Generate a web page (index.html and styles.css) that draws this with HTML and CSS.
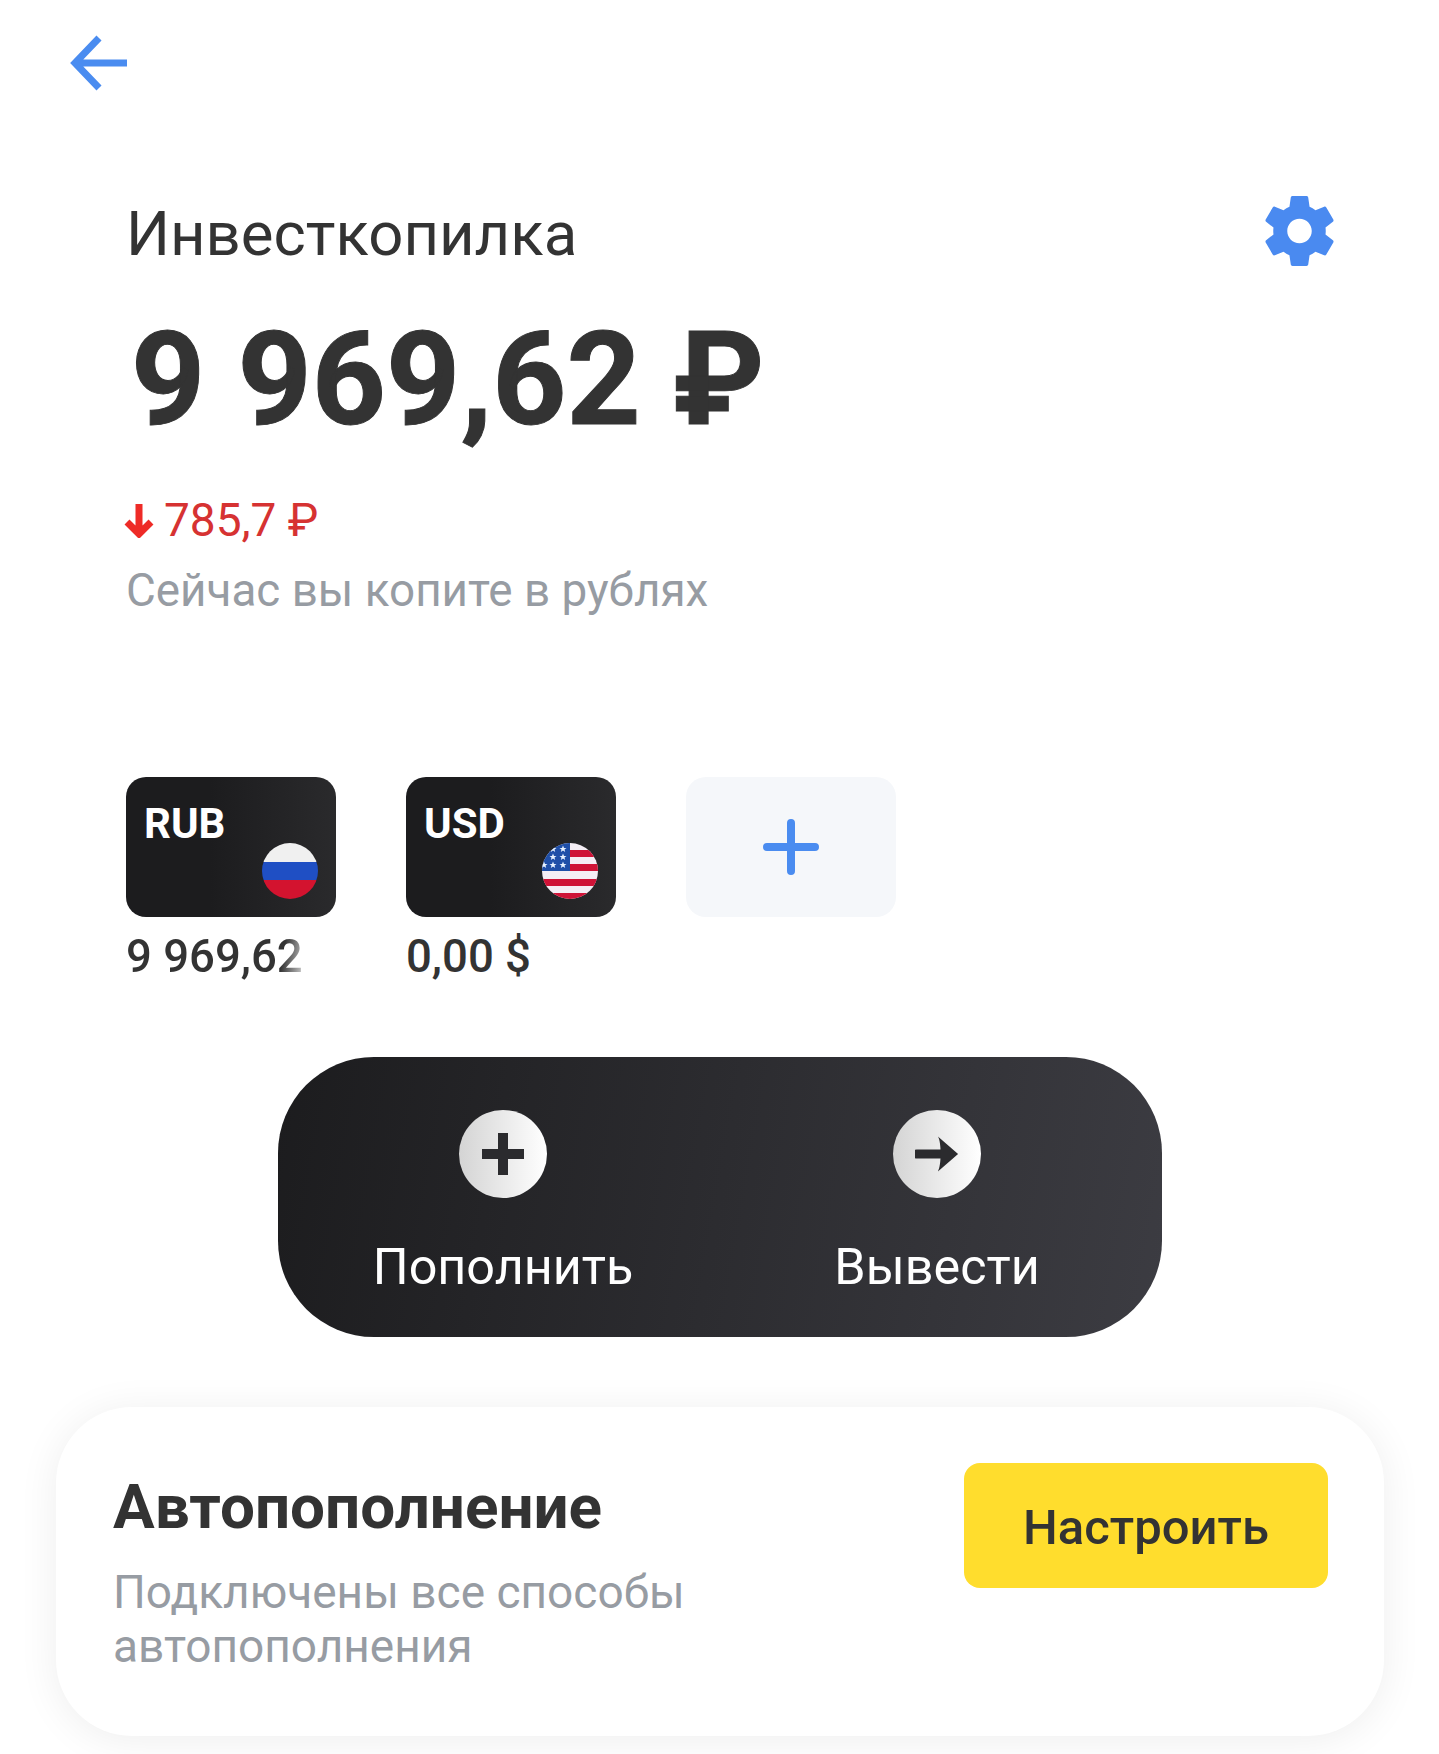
FILE: index.html
```html
<!DOCTYPE html>
<html lang="ru">
<head>
    <meta charset="UTF-8">
    <meta name="viewport" content="width=device-width, initial-scale=1.0">
    <title>Инвесткопилка</title>
    <link rel="stylesheet" href="styles.css">
</head>
<body>
    <!-- Top bar -->
    <div class="topbar">
        <svg class="back-icon" viewBox="0 0 57 54" aria-label="Назад">
            <path d="M57 27H6M29 2 5 27l24 25" fill="none" stroke="#4a8cf0" stroke-width="7"/>
        </svg>
    </div>

    <!-- Summary -->
    <div class="summary">
        <div class="summary-head">
            <h1 class="summary-title">Инвесткопилка</h1>
            <svg class="gear-icon" viewBox="2.2 2 19.6 20" aria-label="Настройки">
                <path fill="#4a8af0" fill-rule="evenodd" d="M19.43 12.98c.04-.32.07-.64.07-.98s-.03-.66-.07-.98l2.11-1.65c.19-.15.24-.42.12-.64l-2-3.46c-.12-.22-.39-.3-.61-.22l-2.49 1c-.52-.4-1.08-.73-1.69-.98l-.38-2.65C14.46 2.18 14.25 2 14 2h-4c-.25 0-.46.18-.49.42l-.38 2.65c-.61.25-1.17.59-1.69.98l-2.49-1c-.23-.09-.49 0-.61.22l-2 3.46c-.13.22-.07.49.12.64l2.11 1.65c-.04.32-.07.65-.07.98s.03.66.07.98l-2.11 1.65c-.19.15-.24.42-.12.64l2 3.46c.12.22.39.3.61.22l2.49-1c.52.4 1.08.73 1.69.98l.38 2.65c.03.24.24.42.49.42h4c.25 0 .46-.18.49-.42l.38-2.65c.61-.25 1.17-.59 1.69-.98l2.49 1c.23.09.49 0 .61-.22l2-3.46c.12-.22.07-.49-.12-.64l-2.11-1.65zM12 15.5c-1.93 0-3.5-1.57-3.5-3.5s1.57-3.5 3.5-3.5 3.5 1.57 3.5 3.5-1.57 3.5-3.5 3.5z"/>
            </svg>
        </div>
        <div class="summary-amount">9 969,62 ₽</div>
        <div class="summary-change">
            <svg class="down-icon" viewBox="0 0 30 36">
                <path d="M15 2v30M3 20l12 12 12-12" fill="none" stroke="#ee2b27" stroke-width="7"/>
            </svg>
            <span>785,7 ₽</span>
        </div>
        <p class="summary-note">Сейчас вы копите в рублях</p>
    </div>

    <!-- Currencies -->
    <div class="currencies">
        <div class="currency">
            <div class="currency-card">
                <span class="currency-code">RUB</span>
                <svg class="flag" viewBox="0 0 56 56">
                    <rect width="56" height="19" fill="#f0f0f0"/>
                    <rect y="19" width="56" height="18" fill="#1f4fc4"/>
                    <rect y="37" width="56" height="19" fill="#d3132f"/>
                </svg>
            </div>
            <div class="currency-balance currency-balance-fade">9 969,62</div>
        </div>
        <div class="currency">
            <div class="currency-card">
                <span class="currency-code">USD</span>
                <svg class="flag" viewBox="0 0 56 56">
                    <defs>
                        <polygon id="star" points="0,-3.6 1,-1.1 3.5,-1.1 1.5,.5 2.2,3 0,1.5 -2.2,3 -1.5,.5 -3.5,-1.1 -1,-1.1" fill="#e8f2ff"/>
                    </defs>
                    <rect width="56" height="56" fill="#f5eef5"/>
                    <rect x="28" y="7" width="28" height="7" fill="#cf1337"/>
                    <rect x="28" y="21" width="28" height="7" fill="#cf1337"/>
                    <rect y="36" width="56" height="7" fill="#cf1337"/>
                    <rect y="50" width="56" height="6" fill="#cf1337"/>
                    <rect width="28" height="28" fill="#1f4fa8"/>
                    <use href="#star" x="11" y="6"/>
                    <use href="#star" x="21" y="6"/>
                    <use href="#star" x="11" y="14"/>
                    <use href="#star" x="21" y="14"/>
                    <use href="#star" x="2" y="22"/>
                    <use href="#star" x="11" y="22"/>
                    <use href="#star" x="21" y="22"/>
                </svg>
            </div>
            <div class="currency-balance">0,00 $</div>
        </div>
        <div class="currency">
            <div class="currency-card currency-add">
                <svg class="add-icon" viewBox="0 0 56 56">
                    <path d="M28 4v48M4 28h48" fill="none" stroke="#4a8cf0" stroke-width="8" stroke-linecap="round"/>
                </svg>
            </div>
        </div>
    </div>

    <!-- Actions -->
    <div class="actions">
        <div class="action">
            <div class="action-circle">
                <svg class="action-icon" viewBox="0 0 44 44">
                    <path d="M22 1v42M1 22h42" fill="none" stroke="#2b2b2e" stroke-width="10"/>
                </svg>
            </div>
            <span class="action-label">Пополнить</span>
        </div>
        <div class="action">
            <div class="action-circle">
                <svg class="action-icon" viewBox="0 0 48 44">
                    <path d="M2 22h34" fill="none" stroke="#2b2b2e" stroke-width="10" stroke-linecap="round"/>
                    <path d="M25 3 47 22 25 41c4-6 4-32 0-38z" fill="#2b2b2e"/>
                </svg>
            </div>
            <span class="action-label">Вывести</span>
        </div>
    </div>

    <!-- Autopay -->
    <div class="autopay">
        <div class="autopay-text">
            <h2 class="autopay-title">Автопополнение</h2>
            <p class="autopay-note">Подключены все способы автопополнения</p>
        </div>
        <button type="button" class="autopay-btn">Настроить</button>
    </div>
</body>
</html>
```

FILE: styles.css
```css
* {
    margin: 0;
    padding: 0;
    box-sizing: border-box;
}

body {
    font-family: Roboto, 'Liberation Sans', sans-serif;
    background-color: #fff;
    color: #333;
    height: 1754px;
    overflow: hidden;
}

/* Top bar */
.topbar {
    padding: 36px 0 0 70px;
    height: 196px;
}

.back-icon {
    display: block;
    width: 57px;
    height: 54px;
    overflow: visible;
}

/* Summary */
.summary {
    padding: 0 105px 0 126px;
}

.summary-head {
    display: flex;
    justify-content: space-between;
    align-items: flex-start;
    height: 109px;
}

.summary-title {
    margin-top: 2px;
    font-size: 61.7px;
    font-weight: 400;
    line-height: 72px;
    color: #333;
}

.gear-icon {
    width: 69px;
    height: 70px;
}

.summary-amount {
    margin-left: 5px;
    font-size: 129.5px;
    font-weight: 700;
    line-height: 150px;
    -webkit-text-stroke: 1px #333;
}

.summary-change {
    display: flex;
    align-items: center;
    gap: 10px;
    margin: 38px 0 0 -2px;
    font-size: 46px;
    line-height: 54px;
    color: #d63232;
}

.down-icon {
    width: 30px;
    height: 36px;
}

.summary-note {
    margin-top: 17px;
    font-size: 45.8px;
    line-height: 54px;
    color: #979ca3;
}

/* Currencies */
.currencies {
    display: flex;
    gap: 70px;
    padding-left: 126px;
    margin-top: 159px;
}

.currency {
    width: 210px;
}

.currency-card {
    position: relative;
    height: 140px;
    border-radius: 20px;
    background: linear-gradient(90deg, #1c1c1e 40%, #2a2a2c);
    padding: 23px 18px;
}

.currency-code {
    display: block;
    font-size: 42px;
    font-weight: 700;
    line-height: 48px;
    color: #fff;
}

.flag {
    position: absolute;
    right: 18px;
    top: 66px;
    width: 56px;
    height: 56px;
    border-radius: 50%;
}

.currency-add {
    display: flex;
    align-items: center;
    justify-content: center;
    padding: 0;
    background: #f5f7fa;
}

.add-icon {
    width: 56px;
    height: 56px;
}

.currency-balance {
    margin-top: 13px;
    font-size: 45.5px;
    font-weight: 500;
    line-height: 54px;
    white-space: nowrap;
    color: #333;
}

.currency-balance-fade {
    width: 178px;
    background: linear-gradient(100deg, #333 86%, #ddd 100%);
    -webkit-background-clip: text;
    background-clip: text;
    -webkit-text-fill-color: transparent;
}

/* Actions */
.actions {
    display: flex;
    width: 884px;
    height: 280px;
    margin: 73px 0 0 278px;
    padding: 53px 0 0 95px;
    gap: 174px;
    border-radius: 96px;
    background: linear-gradient(100deg, #1c1c1e, #3c3c42);
}

.action {
    display: flex;
    flex-direction: column;
    align-items: center;
    width: 260px;
}

.action-circle {
    display: flex;
    align-items: center;
    justify-content: center;
    width: 88px;
    height: 88px;
    border-radius: 50%;
    background: linear-gradient(90deg, #d4d4d4, #fff);
}

.action-icon {
    width: 44px;
    height: 44px;
}

.action-label {
    margin-top: 40px;
    font-size: 50.3px;
    line-height: 58px;
    color: #fff;
}

/* Autopay */
.autopay {
    display: flex;
    justify-content: space-between;
    align-items: flex-start;
    width: 1328px;
    height: 329px;
    margin: 70px 0 0 56px;
    padding: 56px 56px 0 57px;
    border-radius: 76px;
    background: #fff;
    box-shadow: 0 4px 40px rgba(0, 0, 0, 0.07);
}

.autopay-text {
    width: 600px;
    padding-top: 8px;
}

.autopay-title {
    font-size: 62px;
    font-weight: 700;
    line-height: 72px;
    color: #333;
}

.autopay-note {
    margin-top: 22px;
    font-size: 46px;
    line-height: 54px;
    color: #979ca3;
}

.autopay-btn {
    width: 364px;
    height: 125px;
    padding-top: 3px;
    border: none;
    border-radius: 16px;
    background: #ffdd2d;
    font-family: inherit;
    font-size: 49px;
    font-weight: 500;
    color: #333;
    cursor: pointer;
}
```
